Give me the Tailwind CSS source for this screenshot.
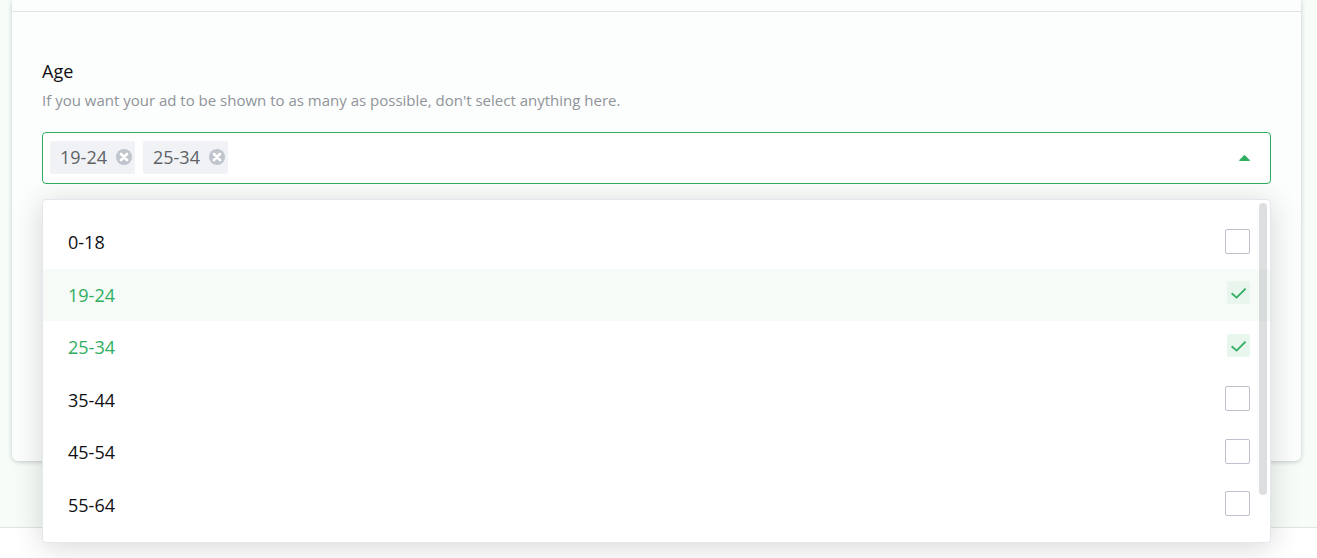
<!DOCTYPE html>
<html lang="en">

<head>
    <meta charset="UTF-8">
    <meta name="viewport" content="width=device-width, initial-scale=1.0">
    <title>Ad Targeting</title>
    <script src="https://cdn.jsdelivr.net/npm/@tailwindcss/browser@4"></script>
</head>

<body class="flex min-h-screen flex-col bg-white font-['Open_Sans',sans-serif] text-[#101014]">
    <main class="border-b border-[#e1e4e3] bg-[#f6fcf8] px-3 pb-[66px]">
        <div class="mr-1 rounded-b-md bg-[#fcfefd] shadow-[0_1px_5px_rgba(0,0,0,0.2)]">
            <div class="h-3 border-b border-[#e1e4e3]"></div>

            <!-- Age -->
            <section class="px-[30px] pt-[47px] pb-[277px]">
                <h2 class="text-lg leading-6"><label for="age">Age</label></h2>
                <p class="mt-[5px] text-[15px] leading-6 text-[#909399]">If you want your ad to be shown to as many as possible, don't select anything here.</p>

                <div class="relative mt-5">
                    <div class="flex h-[52px] items-start gap-2 rounded border border-[#2fae60] bg-white pt-2 pr-5 pl-[7px]">
                        <span class="flex h-[33px] items-center gap-[9px] rounded-xs bg-[#f0f2f5] pr-[3px] pb-px pl-2.5 text-lg text-[#606266]">
                            19-24
                            <button type="button" aria-label="Remove 19-24" class="mb-px">
                                <svg class="size-4" viewBox="0 0 16 16" fill="none">
                                    <circle cx="8" cy="8" r="8" fill="#bfc4cd" />
                                    <path d="M5 5l6 6M11 5l-6 6" stroke="#fff" stroke-width="2.8" stroke-linecap="round" />
                                </svg>
                            </button>
                        </span>
                        <span class="flex h-[33px] items-center gap-[9px] rounded-xs bg-[#f0f2f5] pr-[3px] pb-px pl-2.5 text-lg text-[#606266]">
                            25-34
                            <button type="button" aria-label="Remove 25-34" class="mb-px">
                                <svg class="size-4" viewBox="0 0 16 16" fill="none">
                                    <circle cx="8" cy="8" r="8" fill="#bfc4cd" />
                                    <path d="M5 5l6 6M11 5l-6 6" stroke="#fff" stroke-width="2.8" stroke-linecap="round" />
                                </svg>
                            </button>
                        </span>
                        <input id="age" type="text" class="h-8 min-w-0 flex-1 text-lg outline-none">
                        <button type="button" aria-label="Close list" class="flex h-[33px] items-center">
                            <svg class="h-1.5 w-[11px]" viewBox="0 0 11 6" fill="#2fae60">
                                <path d="M4.8 .4Q5.5 -.2 6.2 .4L10.700 5Q11.200 6 10.200 6H.8Q-.2 6 .3 5Z" />
                            </svg>
                        </button>
                    </div>

                    <!-- Dropdown -->
                    <div class="absolute inset-x-0 top-[67px] rounded border border-[#e4e7ed] bg-white pt-4 pb-[11px] shadow-[0_4px_30px_rgba(0,0,0,0.16)]">
                        <div class="grid h-[315px] auto-rows-fr text-lg">
                            <label class="flex items-center justify-between pr-5 pl-[25px]">
                                0-18
                                <input type="checkbox" class="mb-[2px] size-[25px] appearance-none rounded-xs border border-[#c0bfcb] bg-white">
                            </label>
                            <label class="flex items-center justify-between bg-[#f6fbf8] pr-5 pl-[25px] text-[#2fae60]">
                                19-24
                                <span class="mb-1 grid">
                                    <input type="checkbox" checked class="col-start-1 row-start-1 size-[23px] appearance-none rounded-xs bg-[#e9f6ee]">
                                    <svg class="pointer-events-none col-start-1 row-start-1 size-[23px]" viewBox="0 0 23 23" fill="none" stroke="#2fae60" stroke-width="1.8">
                                        <path d="M4.600 12.200L9.600 16.600L18.600 7.600" />
                                    </svg>
                                </span>
                            </label>
                            <label class="flex items-center justify-between pr-5 pl-[25px] text-[#2fae60]">
                                25-34
                                <span class="mb-1 grid">
                                    <input type="checkbox" checked class="col-start-1 row-start-1 size-[23px] appearance-none rounded-xs bg-[#e9f6ee]">
                                    <svg class="pointer-events-none col-start-1 row-start-1 size-[23px]" viewBox="0 0 23 23" fill="none" stroke="#2fae60" stroke-width="1.8">
                                        <path d="M4.600 12.200L9.600 16.600L18.600 7.600" />
                                    </svg>
                                </span>
                            </label>
                            <label class="flex items-center justify-between pr-5 pl-[25px]">
                                35-44
                                <input type="checkbox" class="mb-[2px] size-[25px] appearance-none rounded-xs border border-[#c0bfcb] bg-white">
                            </label>
                            <label class="flex items-center justify-between pr-5 pl-[25px]">
                                45-54
                                <input type="checkbox" class="mb-[2px] size-[25px] appearance-none rounded-xs border border-[#c0bfcb] bg-white">
                            </label>
                            <label class="flex items-center justify-between pr-5 pl-[25px]">
                                55-64
                                <input type="checkbox" class="mb-[2px] size-[25px] appearance-none rounded-xs border border-[#c0bfcb] bg-white">
                            </label>
                        </div>
                        <!-- Scroll thumb -->
                        <div class="absolute top-[3px] right-[3px] h-[292px] w-2 rounded-full bg-[#909399]/30"></div>
                    </div>
                </div>
            </section>
        </div>
    </main>
</body>

</html>
